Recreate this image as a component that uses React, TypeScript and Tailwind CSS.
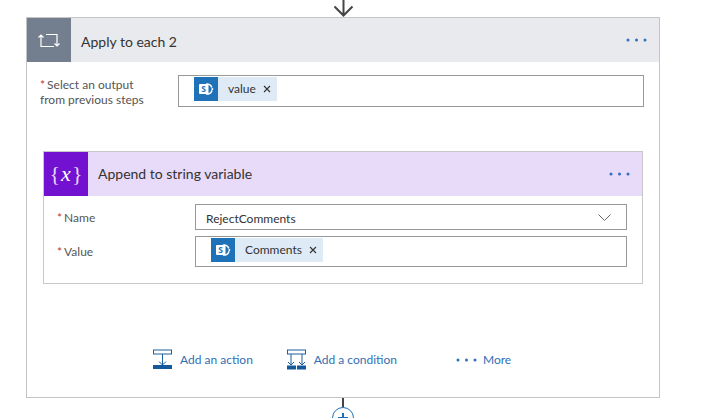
const font = "[font-family:'Lato',sans-serif]";

function SharePointIcon({ className }: { className: string }) {
  return (
    <span className={`flex items-center justify-center bg-[#1f72b8] ${className}`}>
      <svg width="18" height="14" viewBox="0 0 18 14">
        <path d="M9 2.200A5 5 0 0 1 14.800 5.500" fill="none" stroke="#fff" strokeWidth="1.600" />
        <path d="M15 8.200A5 5 0 0 1 9 11.800" fill="none" stroke="#fff" strokeWidth="1.600" />
        <circle cx="15.300" cy="7" r="1" fill="#fff" />
        <rect x="2" y="2" width="9.500" height="10" rx="1" fill="#fff" />
        <text x="6.700" y="10.200" textAnchor="middle" fontSize="8.500" fontWeight="700" fill="#1f72b8" fontFamily="'Open Sans',sans-serif">S</text>
      </svg>
    </span>
  );
}

function Token({ label, gap }: { label: string; gap: string }) {
  return (
    <div className="flex h-6 items-center bg-[#deebf7]">
      <SharePointIcon className="h-6 w-6" />
      <span className={`ml-[10px] text-[12px] leading-none text-[#333] ${gap}`}>{label}</span>
      <svg className="mr-[6px]" width="8" height="8" viewBox="0 0 8 8">
        <path d="M1 1l6 6M7 1L1 7" stroke="#333" strokeWidth="1.100" fill="none" />
      </svg>
    </div>
  );
}

function Dots() {
  return (
    <svg width="22" height="4" viewBox="0 0 22 4">
      <circle cx="2" cy="2" r="1.500" fill="#2f6fc0" />
      <circle cx="10.500" cy="2" r="1.500" fill="#2f6fc0" />
      <circle cx="19" cy="2" r="1.500" fill="#2f6fc0" />
    </svg>
  );
}

function Star() {
  return <span className="mr-[2px] text-[#c0392b]">*</span>;
}

function AddAction() {
  return (
    <svg width="21" height="21" viewBox="0 0 21 21">
      <rect x="1.500" y="1" width="18" height="4" fill="#fff" stroke="#1e5f9e" strokeWidth="1" />
      <path d="M10.500 5v11M7 12.500l3.500 3.500 3.500-3.500" fill="none" stroke="#1e5f9e" strokeWidth="1" />
      <rect x="1" y="16" width="19" height="4" fill="#14599c" />
    </svg>
  );
}

function AddCondition() {
  return (
    <svg width="21" height="21" viewBox="0 0 21 21">
      <rect x="1.500" y="1" width="18" height="4" fill="#fff" stroke="#1e5f9e" strokeWidth="1" />
      <path d="M5 5v11M2 13l3 3 3-3M16 5v11M13 13l3 3 3-3" fill="none" stroke="#1e5f9e" strokeWidth="1" />
      <rect x="1" y="16.500" width="9" height="4" fill="#14599c" />
      <rect x="11" y="16.500" width="9" height="4" fill="#14599c" />
    </svg>
  );
}

export default function App() {
  return (
    <div className={`flex h-[418px] w-[714px] flex-col overflow-hidden bg-white ${font}`}>
      <div className="ml-[333px] h-[17px] w-5">
        <svg width="21" height="17" viewBox="0 0 21 17">
          <path d="M10.500 0v15M1.500 6.500l9 9 9-9" fill="none" stroke="#444" strokeWidth="2" />
        </svg>
      </div>

      <div className="ml-[26px] h-[381px] w-[634px] shrink-0 border border-[#c4c4c4]">
        <div className="flex h-[44px] items-center bg-[#e9eaed]">
          <div className="flex h-[44px] w-[44px] items-center justify-center bg-[#737f8e]">
            <svg width="22" height="16" viewBox="0 0 22 16">
              <path d="M3 3v11.500h13M.5 5.500L3 3l2.500 2.500M8 2.500h11V14M16.500 11.500L19 14l2.500-2.500" fill="none" stroke="#fff" strokeWidth="1.200" />
            </svg>
          </div>
          <span className="ml-[10px] pt-[2px] text-[14px] text-[#333]">Apply to each 2</span>
          <div className="ml-auto mr-[11px] flex">
            <Dots />
          </div>
        </div>

        <div className="mt-[13px] ml-[13px] flex items-start">
          <div className="w-[138px] pt-[2px] text-[12px] leading-[15px] text-[#555]">
            <Star />Select an output
            <br />
            from previous steps
          </div>
          <div className="flex h-8 w-[466px] items-start border border-[#999] pl-[15px] pt-[1px]">
            <Token label="value" gap="mr-[7px]" />
          </div>
        </div>

        <div className="ml-4 mt-[44px] h-[133px] w-[600px] border border-[#c8c8c8]">
          <div className="flex h-[44px] items-center bg-[#e8daf9]">
            <div className="flex h-[44px] w-[44px] items-center justify-center bg-[#7311d0] font-['Liberation_Serif',serif] text-[22px] leading-none text-white">
              <span className="text-[#e6d6fa]">{"{"}</span>
              <span className="px-[1px] italic">x</span>
              <span className="text-[#e6d6fa]">{"}"}</span>
            </div>
            <span className="ml-[10px] pb-[1px] text-[14px] text-[#333]">Append to string variable</span>
            <div className="ml-auto mr-[11px] flex">
              <Dots />
            </div>
          </div>

          <div className="mt-2 flex items-center pl-[13px]">
            <div className="w-[138px] pt-[2px] text-[12px] text-[#555]">
              <Star />Name
            </div>
            <div className="flex h-[26px] w-[432px] items-center justify-between border border-[#999] pl-[10px] pr-[15px] text-[12px] text-[#333]">
              <span className="pt-[3px]">RejectComments</span>
              <svg width="13" height="7" viewBox="0 0 13 7">
                <path d="M.5.5l6 6 6-6" fill="none" stroke="#666" strokeWidth="1" />
              </svg>
            </div>
          </div>

          <div className="mt-[6px] flex items-center pl-[13px]">
            <div className="w-[138px] text-[12px] text-[#555]">
              <Star />Value
            </div>
            <div className="flex h-[31px] w-[432px] items-start border border-[#999] pl-[15px] pt-[1px]">
              <Token label="Comments" gap="mr-[7px]" />
            </div>
          </div>
        </div>

        <div className="ml-[125px] mt-[65px] flex items-center text-[12px] text-[#2f6fb5]">
          <AddAction />
          <span className="ml-[7px] pt-[1px]">Add an action</span>
          <span className="ml-[33px] flex">
            <AddCondition />
          </span>
          <span className="ml-[7px] pt-[1px]">Add a condition</span>
          <span className="ml-[59px] flex">
            <Dots />
          </span>
          <span className="ml-[5px] pt-[1px]">More</span>
        </div>
      </div>

      <div className="ml-[342px] h-[9px] w-[2px] shrink-0 bg-[#444]" />
      <div className="ml-[332px] flex h-[22px] w-[22px] shrink-0 items-center justify-center rounded-full border border-[#1e6fb5]">
        <svg width="12" height="12" viewBox="0 0 12 12">
          <path d="M6 1v10M1 6h10" stroke="#1e6fb5" strokeWidth="2" fill="none" />
        </svg>
      </div>
    </div>
  );
}
